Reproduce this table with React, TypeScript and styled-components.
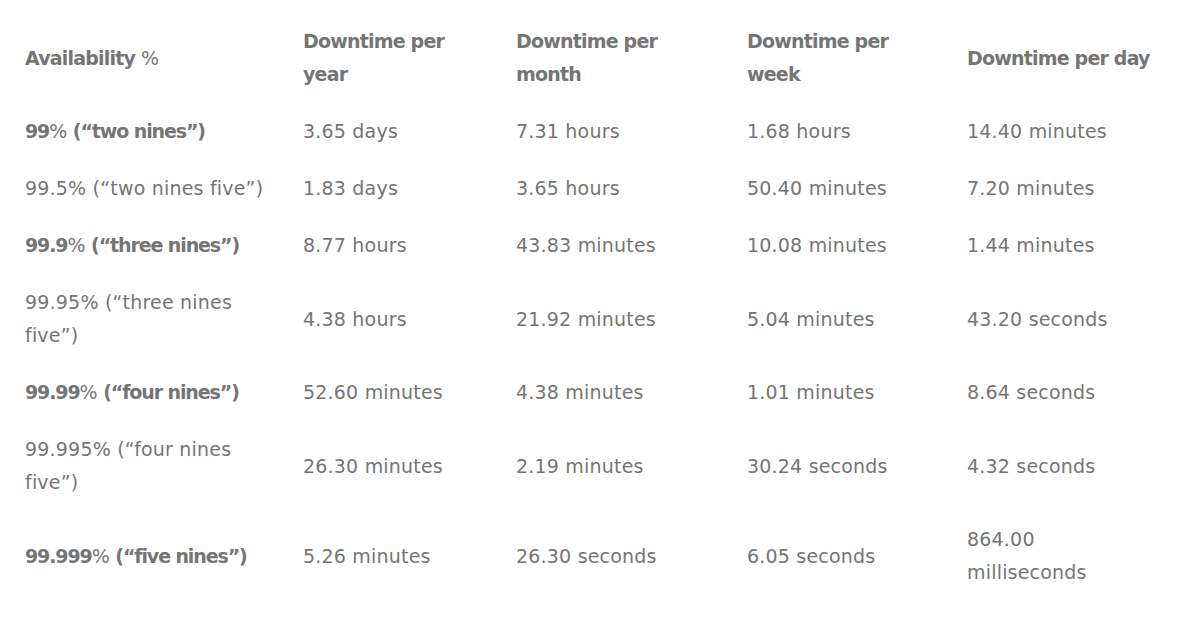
import React from 'react';
import styled, { createGlobalStyle } from 'styled-components';

const GlobalStyle = createGlobalStyle`
  html, body {
    margin: 0;
    padding: 0;
    background: #ffffff;
  }
  body {
    font-family: 'DejaVu Sans', 'Liberation Sans', sans-serif;
    color: #757575;
  }
`;

const Wrapper = styled.div`
  padding: 13px 13px 0 13px;
`;

const Table = styled.table`
  border-collapse: collapse;
  table-layout: fixed;
  width: 1153px;
`;

const Col = styled.col<{ $w: number }>`
  width: ${(p) => p.$w}px;
`;

const HeadCell = styled.th`
  text-align: left;
  vertical-align: middle;
  padding: 12px;
  font-size: 19px;
  line-height: 33px;
  font-weight: 700;
  color: #757575;
  letter-spacing: -0.8px;
`;

const Cell = styled.td<{ $strong?: boolean }>`
  vertical-align: middle;
  padding: 12px;
  font-size: 19px;
  line-height: 33px;
  font-weight: ${(p) => (p.$strong ? 700 : 400)};
  color: #757575;
  letter-spacing: ${(p) => (p.$strong ? '-1.1px' : '0.2px')};
`;

// the % sign renders in the regular weight even inside bold labels
const Pct = styled.span`
  font-weight: 400;
  letter-spacing: 0;
`;

interface Row {
  level: string;
  label: string;
  strong: boolean;
  values: string[];
}

const rows: Row[] = [
  { level: '99', label: ' (“two nines”)', strong: true, values: ['3.65 days', '7.31 hours', '1.68 hours', '14.40 minutes'] },
  { level: '99.5', label: ' (“two nines five”)', strong: false, values: ['1.83 days', '3.65 hours', '50.40 minutes', '7.20 minutes'] },
  { level: '99.9', label: ' (“three nines”)', strong: true, values: ['8.77 hours', '43.83 minutes', '10.08 minutes', '1.44 minutes'] },
  { level: '99.95', label: ' (“three nines five”)', strong: false, values: ['4.38 hours', '21.92 minutes', '5.04 minutes', '43.20 seconds'] },
  { level: '99.99', label: ' (“four nines”)', strong: true, values: ['52.60 minutes', '4.38 minutes', '1.01 minutes', '8.64 seconds'] },
  { level: '99.995', label: ' (“four nines five”)', strong: false, values: ['26.30 minutes', '2.19 minutes', '30.24 seconds', '4.32 seconds'] },
  { level: '99.999', label: ' (“five nines”)', strong: true, values: ['5.26 minutes', '26.30 seconds', '6.05 seconds', '864.00 milliseconds'] },
];

const headers = ['Downtime per year', 'Downtime per month', 'Downtime per week', 'Downtime per day'];

const App: React.FC = () => {
  return (
    <>
      <GlobalStyle />
      <Wrapper>
        <Table>
          <colgroup>
            <Col $w={278} />
            <Col $w={213} />
            <Col $w={231} />
            <Col $w={220} />
            <Col $w={211} />
          </colgroup>
          <thead>
            <tr>
              <HeadCell>
                Availability <Pct>%</Pct>
              </HeadCell>
              {headers.map((h) => (
                <HeadCell key={h}>{h}</HeadCell>
              ))}
            </tr>
          </thead>
          <tbody>
            {rows.map((r) => (
              <tr key={r.level}>
                {r.strong ? (
                  <Cell $strong>
                    {r.level}
                    <Pct>%</Pct>
                    {r.label}
                  </Cell>
                ) : (
                  <Cell>{`${r.level}%${r.label}`}</Cell>
                )}
                {r.values.map((v, i) => (
                  <Cell key={i}>{v}</Cell>
                ))}
              </tr>
            ))}
          </tbody>
        </Table>
      </Wrapper>
    </>
  );
};

export default App;
